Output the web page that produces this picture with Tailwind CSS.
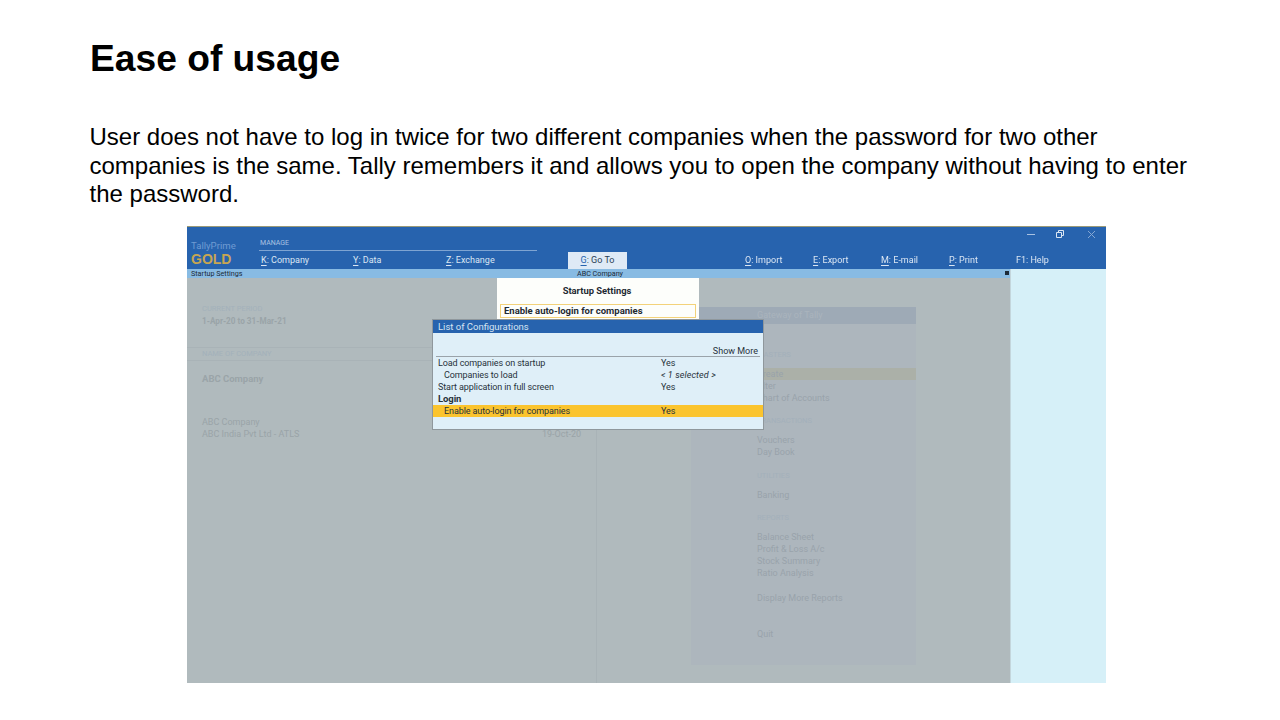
<!DOCTYPE html>
<html lang="en">
<head>
  <meta charset="UTF-8" />
  <title>Ease of usage</title>
  <script src="https://cdn.jsdelivr.net/npm/@tailwindcss/browser@4"></script>
</head>
<body class="bg-white text-black font-['Liberation_Sans',Arial,sans-serif] w-[1280px] h-[720px] overflow-hidden">

  <!-- Slide text -->
  <div class="pl-[90px] pr-[90px] pt-[37px]">
    <h1 class="text-[37.2px] leading-[42px] font-bold">Ease of usage</h1>
    <p class="mt-[44px] -ml-[0.5px] text-[24px] leading-[28.6px] w-[1110px]">User does not have to log in twice for two different companies when the password for two other companies is the same. Tally remembers it and allows you to open the company without having to enter the password.</p>
  </div>

  <!-- Tally screenshot -->
  <div class="mt-[17px] ml-[187px] w-[919px] h-[457px] flex flex-col overflow-hidden blur-[0.45px] text-[9px] font-['Roboto',sans-serif]">

    <!-- Top bar -->
    <div class="h-[43px] bg-[#2763ae] border-t border-[#9a9a78] flex text-[#dbe6f3] shrink-0">
      <div class="w-[72px] pl-[4px] flex flex-col pt-[12px]">
        <span class="text-[#6f9bd2] text-[9.6px] leading-[13px]">TallyPrime</span>
        <span class="text-[#c7a652] text-[14px] leading-[15px] font-bold font-['Liberation_Sans',sans-serif]">GOLD</span>
      </div>
      <div class="w-[278px] flex flex-col pt-[10px]">
        <span class="text-[#a9c2e2] text-[7px] leading-[12px] h-[13px] border-b border-[#7ea4d2] pl-[1px] box-content">MANAGE</span>
        <div class="grid grid-cols-[92px_93px_1fr] pl-[2px] pt-[3px] leading-[12px]">
          <span><span class="underline underline-offset-2">K</span>: Company</span>
          <span><span class="underline underline-offset-2">Y</span>: Data</span>
          <span><span class="underline underline-offset-2">Z</span>: Exchange</span>
        </div>
      </div>
      <div class="ml-[31px] w-[59px] h-[17px] mt-[25px] bg-[#dfeaf6] text-[#2a3d55] flex items-center justify-center">
        <span><span class="underline underline-offset-2 text-[#2763ae]">G</span>: Go To</span>
      </div>
      <div class="relative flex-1">
        <div class="ml-[118px] mt-[27px] grid grid-cols-[68px_68px_68px_67px_60px] leading-[12px]">
          <span><span class="underline underline-offset-2">O</span>: Import</span>
          <span><span class="underline underline-offset-2">E</span>: Export</span>
          <span><span class="underline underline-offset-2">M</span>: E-mail</span>
          <span><span class="underline underline-offset-2">P</span>: Print</span>
          <span>F1: Help</span>
        </div>
        <!-- window controls -->
        <div class="absolute right-[10px] top-[3px] flex items-center">
          <svg class="text-[#a9c2e2]" width="8" height="8" viewBox="0 0 8 8"><path d="M0 4.5h8" stroke="currentColor" fill="none"/></svg>
          <svg class="ml-[21px]" width="8" height="8" viewBox="0 0 8 8" fill="none" stroke="#dbe6f3"><path d="M.5 2.5h5v5h-5zM2.5 2.5v-2h5v5h-2"/></svg>
          <svg class="ml-[23px] text-[#86a8d4]" width="9" height="9" viewBox="0 0 9 9" fill="none" stroke="currentColor"><path d="M1 1l7 7M8 1l-7 7"/></svg>
        </div>
      </div>
    </div>

    <div class="flex flex-1 min-h-0">
      <div class="w-[823px] flex flex-col relative">
        <!-- Title strip -->
        <div class="h-[9px] bg-[#88bbe3] grid grid-cols-[1fr_auto_1fr] items-center pl-[4px] pr-[1px] text-[7.2px] leading-[9px] text-[#1c2a38] shrink-0">
          <span>Startup Settings</span>
          <span>ABC Company</span>
          <span class="flex justify-end"><span class="w-[4px] h-[4px] bg-[#1c2a38]"></span></span>
        </div>

        <!-- Dimmed background -->
        <div class="flex-1 bg-[#b0babd] flex text-[#9aa4a8] relative">
          <div class="w-[410px] border-r border-[#a9b3b7] pt-[26px]">
            <div class="pl-[15px] h-[43px]">
              <div class="text-[7.5px] leading-[9px] text-[#a3b1bb]">CURRENT PERIOD</div>
              <div class="mt-[2px] font-bold text-[8.2px] leading-[12px]">1-Apr-20 to 31-Mar-21</div>
            </div>
            <div class="pl-[15px] h-[14px] border-y border-[#a9b3b7] text-[7.5px] leading-[12px] text-[#a3b1bb]">NAME OF COMPANY</div>
            <div class="pl-[15px] pt-[11px] font-bold text-[9.5px] leading-[13px]">ABC Company</div>
            <div class="pl-[15px] pr-[15px] mt-[31px] leading-[12px] flex justify-between items-end">
              <div>
                <div>ABC Company</div>
                <div>ABC India Pvt Ltd - ATLS</div>
              </div>
              <span>19-Oct-20</span>
            </div>
          </div>

          <div class="ml-[94px] mt-[29px] mb-[18px] w-[225px] bg-[#adb6bd] leading-[12px] text-[#99a3ab]">
            <div class="h-[17px] bg-[#9eaab6] pl-[66px] leading-[17px] text-[#aab4bd]">Gateway of Tally</div>
            <div class="pl-[66px] mt-[26px] text-[7.5px] leading-[9px] text-[#a3b0bb]">MASTERS</div>
            <div class="mt-[9px] h-[12px] bg-[#abb0a8] pl-[66px]">Create</div>
            <div class="pl-[66px]">Alter</div>
            <div class="pl-[66px]">Chart of Accounts</div>
            <div class="pl-[66px] mt-[12px] text-[7.5px] leading-[9px] text-[#a3b0bb]">TRANSACTIONS</div>
            <div class="pl-[66px] mt-[9px]">Vouchers</div>
            <div class="pl-[66px]">Day Book</div>
            <div class="pl-[66px] mt-[13px] text-[7.5px] leading-[9px] text-[#a3b0bb]">UTILITIES</div>
            <div class="pl-[66px] mt-[9px]">Banking</div>
            <div class="pl-[66px] mt-[12px] text-[7.5px] leading-[9px] text-[#a3b0bb]">REPORTS</div>
            <div class="pl-[66px] mt-[9px]">Balance Sheet</div>
            <div class="pl-[66px]">Profit &amp; Loss A/c</div>
            <div class="pl-[66px]">Stock Summary</div>
            <div class="pl-[66px]">Ratio Analysis</div>
            <div class="pl-[66px] mt-[13px]">Display More Reports</div>
            <div class="pl-[66px] mt-[24px]">Quit</div>
          </div>

          <!-- Startup Settings dialog -->
          <div class="absolute left-[310px] top-0 w-[202px] h-[44px] bg-[#fdfefb] text-[#1f2a33] px-[3px]">
            <div class="text-center font-bold text-[9.4px] leading-[12px] pt-[7px] h-[26px] pr-[2px]">Startup Settings</div>
            <div class="border border-[#f3d27a] h-[14px] text-[9.5px] leading-[12px] pl-[3px] font-bold">Enable auto-login for companies</div>
          </div>

          <!-- List of Configurations dialog -->
          <div class="absolute left-[245px] top-[41px] w-[332px] h-[111px] bg-[#dfeff8] border border-[#8f979c] text-[#27323b] leading-[12px] tracking-[-0.1px]">
            <div class="h-[13px] bg-[#2763ae] text-[#d6e3f2] pl-[5px] text-[9.5px] leading-[13px] tracking-normal">List of Configurations</div>
            <div class="mx-[3px] mt-[12px] pr-[2px] h-[12px] border-b border-[#9aa3aa] text-right tracking-normal">Show More</div>
            <div class="pl-[5px] grid grid-cols-[223px_1fr]"><span>Load companies on startup</span><span>Yes</span></div>
            <div class="pl-[5px] grid grid-cols-[223px_1fr]"><span class="pl-[6px]">Companies to load</span><span class="italic tracking-[0.1px]">&lt; 1 selected &gt;</span></div>
            <div class="pl-[5px] grid grid-cols-[223px_1fr]"><span>Start application in full screen</span><span>Yes</span></div>
            <div class="pl-[5px] font-bold text-[9.5px]">Login</div>
            <div class="pl-[5px] grid grid-cols-[223px_1fr] bg-[#fbc42e]"><span class="pl-[6px]">Enable auto-login for companies</span><span>Yes</span></div>
          </div>
        </div>
      </div>

      <!-- Right side panel -->
      <div class="flex-1 bg-[#d6f0f8] border-l border-[#c4d6dc]"></div>
    </div>
  </div>
</body>
</html>
